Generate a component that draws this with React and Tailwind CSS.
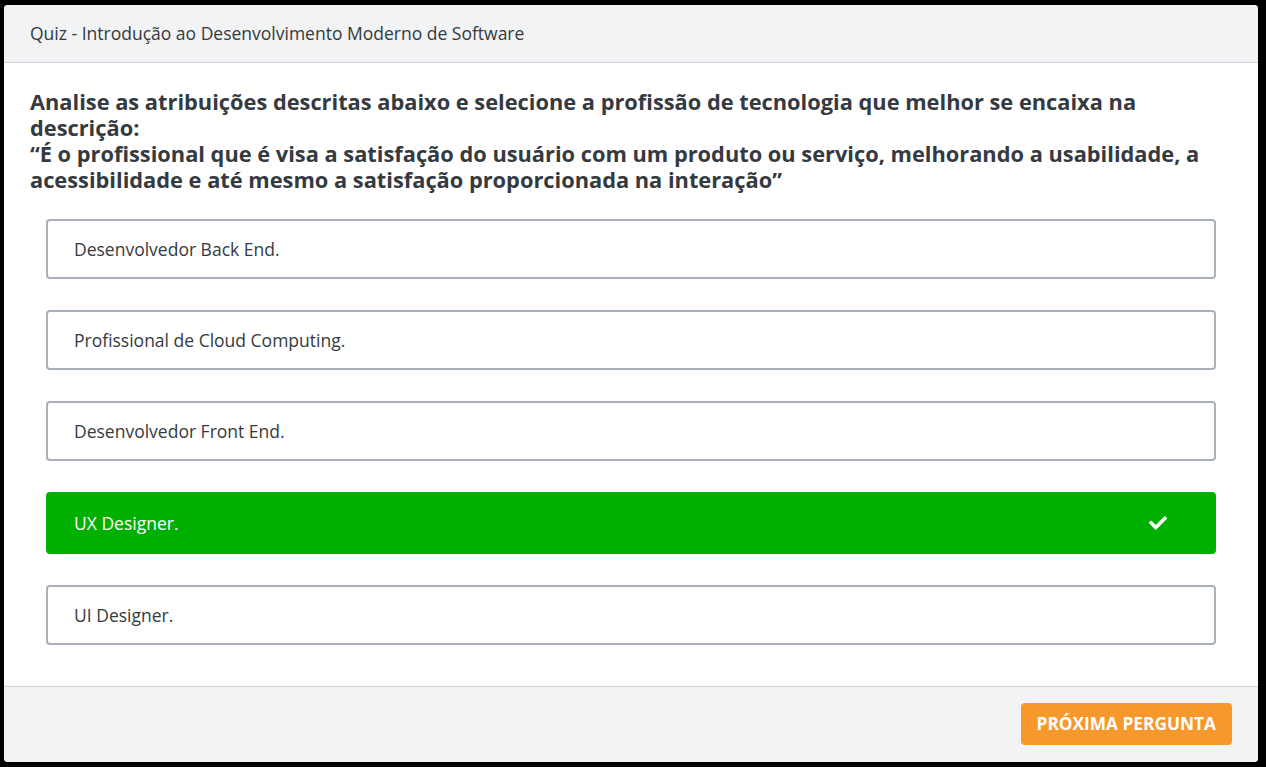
import React, { useState } from "react";

const options = [
  "Desenvolvedor Back End.",
  "Profissional de Cloud Computing.",
  "Desenvolvedor Front End.",
  "UX Designer.",
  "UI Designer.",
];

function CheckIcon() {
  return (
    <svg viewBox="0 0 512 512" className="w-[18px] h-[18px]" fill="currentColor">
      <path d="M173.9 439.4l-166.4-166.4c-10-10-10-26.2 0-36.2l36.2-36.2c10-10 26.2-10 36.2 0L192 312.7 432.1 72.6c10-10 26.2-10 36.2 0l36.2 36.2c10 10 10 26.2 0 36.2L210.1 439.4c-10 10-26.2 10-36.2 0z" />
    </svg>
  );
}

export default function App() {
  const [selected, setSelected] = useState(3);

  return (
    <div
      className="w-[1266px] h-[767px] bg-black pt-[5px] pl-[4px] pr-[8px] pb-[5px]"
      style={{ fontFamily: '"Open Sans", "Liberation Sans", sans-serif' }}
    >
      <div className="flex flex-col h-full bg-white rounded-[4px] overflow-hidden">
        <div className="h-[58px] flex items-center px-[26px] bg-[#f2f3f5] border-b border-[#cfd3d8] text-[17.5px] text-[#343a40]">
          Quiz - Introdução ao Desenvolvimento Moderno de Software
        </div>
        <div className="flex-1 px-[26px] pt-[26px]">
          <h2 className="text-[21.8px] leading-[26px] font-bold text-[#343a40]">
            Analise as atribuições descritas abaixo e selecione a profissão de tecnologia que melhor se encaixa na descrição:
            <br />
            “É o profissional que é visa a satisfação do usuário com um produto ou serviço, melhorando a usabilidade, a acessibilidade e até mesmo a satisfação proporcionada na interação”
          </h2>
          <div className="flex flex-col gap-[31px] px-[16px] mt-[26px]">
            {options.map((opt, index) => (
              <button
                key={index}
                onClick={() => setSelected(index)}
                className={
                  selected === index
                    ? "flex items-center justify-between h-[62px] px-[26px] rounded-[4px] bg-[#00b000] border-2 border-[#00b000] text-white text-[17.5px] text-left"
                    : "flex items-center justify-between h-[60px] px-[26px] rounded-[4px] bg-white border-2 border-[#a9b0b8] text-[#343a40] text-[17.5px] text-left"
                }
              >
                <span>{opt}</span>
                {selected === index && (
                  <span className="mr-[21px]">
                    <CheckIcon />
                  </span>
                )}
              </button>
            ))}
          </div>
        </div>
        <div className="h-[76px] flex items-start justify-end pt-[16px] pr-[26px] bg-[#f2f3f5] border-t border-[#cfd3d8]">
          <button className="h-[42px] px-[16px] rounded-[4px] bg-[#f7982d] text-white text-[17.3px] font-bold uppercase">
            Próxima pergunta
          </button>
        </div>
      </div>
    </div>
  );
}
